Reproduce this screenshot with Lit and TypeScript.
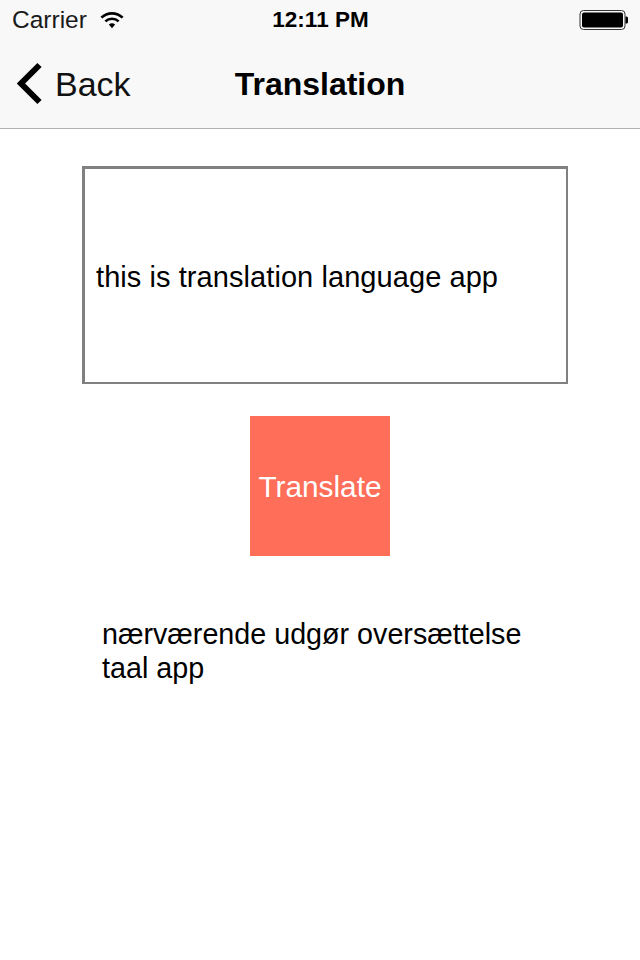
import { LitElement, html, css } from "lit";
import { customElement } from "lit/decorators.js";

@customElement("app-root")
export class AppRoot extends LitElement {
  static styles = css`
    :host {
      display: block;
      width: 640px;
      height: 960px;
      background: #fff;
      color: #000;
      font-family: "Liberation Sans", Arial, sans-serif;
      overflow: hidden;
    }
    .header {
      height: 128px;
      background: #f8f8f8;
      border-bottom: 1px solid #b2b2b2;
      display: flex;
      flex-direction: column;
    }
    .status {
      height: 40px;
      display: grid;
      grid-template-columns: 1fr auto 1fr;
      align-items: center;
      padding: 0 11px 0 12px;
      font-size: 24.5px;
    }
    .status-left {
      display: flex;
      align-items: center;
      gap: 13px;
      color: #1a1a1a;
    }
    .status-time {
      font-weight: 700;
      font-size: 22.5px;
    }
    .status-right {
      display: flex;
      justify-content: flex-end;
    }
    .nav {
      height: 88px;
      display: grid;
      grid-template-columns: 1fr auto 1fr;
      align-items: center;
    }
    .back {
      display: flex;
      align-items: center;
      gap: 12px;
      padding-left: 16px;
      font-size: 34px;
      color: #111;
    }
    .chevron {
      margin-top: -2px;
    }
    .title {
      font-size: 32px;
      font-weight: 700;
    }
    .main {
      display: flex;
      flex-direction: column;
      align-items: center;
      padding-top: 37px;
    }
    .input {
      box-sizing: border-box;
      width: 486px;
      height: 218px;
      margin-left: 10px;
      border: 2px solid #808080;
      border-left-width: 3px;
      border-top-width: 3px;
      display: flex;
      align-items: center;
      padding: 3px 0 0 11px;
      font-size: 29px;
      letter-spacing: 0.07px;
    }
    .button {
      width: 140px;
      height: 140px;
      margin-top: 32px;
      background: #ff6e59;
      color: #fff;
      font-size: 29.8px;
      padding-top: 2px;
      box-sizing: border-box;
      display: flex;
      align-items: center;
      justify-content: center;
    }
    .result {
      box-sizing: border-box;
      width: 640px;
      padding: 61px 100px 0 102px;
      font-size: 28.7px;
      line-height: 34px;
    }
  `;

  render() {
    return html`
      <div class="header">
        <div class="status">
          <div class="status-left">
            <span>Carrier</span>
            <svg width="24" height="20" viewBox="0 0 26 20">
              <path d="M1.5 7.5a16.5 16.5 0 0 1 23 0" fill="none" stroke="#000" stroke-width="2.8"/>
              <path d="M5.8 11.5a10.4 10.4 0 0 1 14.4 0" fill="none" stroke="#000" stroke-width="2.8"/>
              <path d="M9.6 15a5 5 0 0 1 6.8 0L13 19z" fill="#000"/>
            </svg>
          </div>
          <div class="status-time">12:11 PM</div>
          <div class="status-right">
            <svg width="50" height="20" viewBox="0 0 50 20">
              <rect x="3" y="2.5" width="41" height="15" rx="2" fill="#000"/>
              <rect x="1" y="0.5" width="45" height="19" rx="3.5" fill="none" stroke="#333" stroke-width="1"/>
              <path d="M46.5 6.5h1a1.5 1.5 0 0 1 1.5 1.5v4a1.5 1.5 0 0 1-1.5 1.5h-1z" fill="#000"/>
            </svg>
          </div>
        </div>
        <div class="nav">
          <div class="back">
            <svg class="chevron" width="27" height="43" viewBox="0 0 27 43">
              <path d="M23.5 3L5 21.5 23.5 40" fill="none" stroke="#000" stroke-width="6"/>
            </svg>
            <span>Back</span>
          </div>
          <div class="title">Translation</div>
          <div></div>
        </div>
      </div>
      <div class="main">
        <div class="input">this is translation language app</div>
        <div class="button">Translate</div>
        <div class="result">nærværende udgør oversættelse taal app</div>
      </div>
    `;
  }
}
